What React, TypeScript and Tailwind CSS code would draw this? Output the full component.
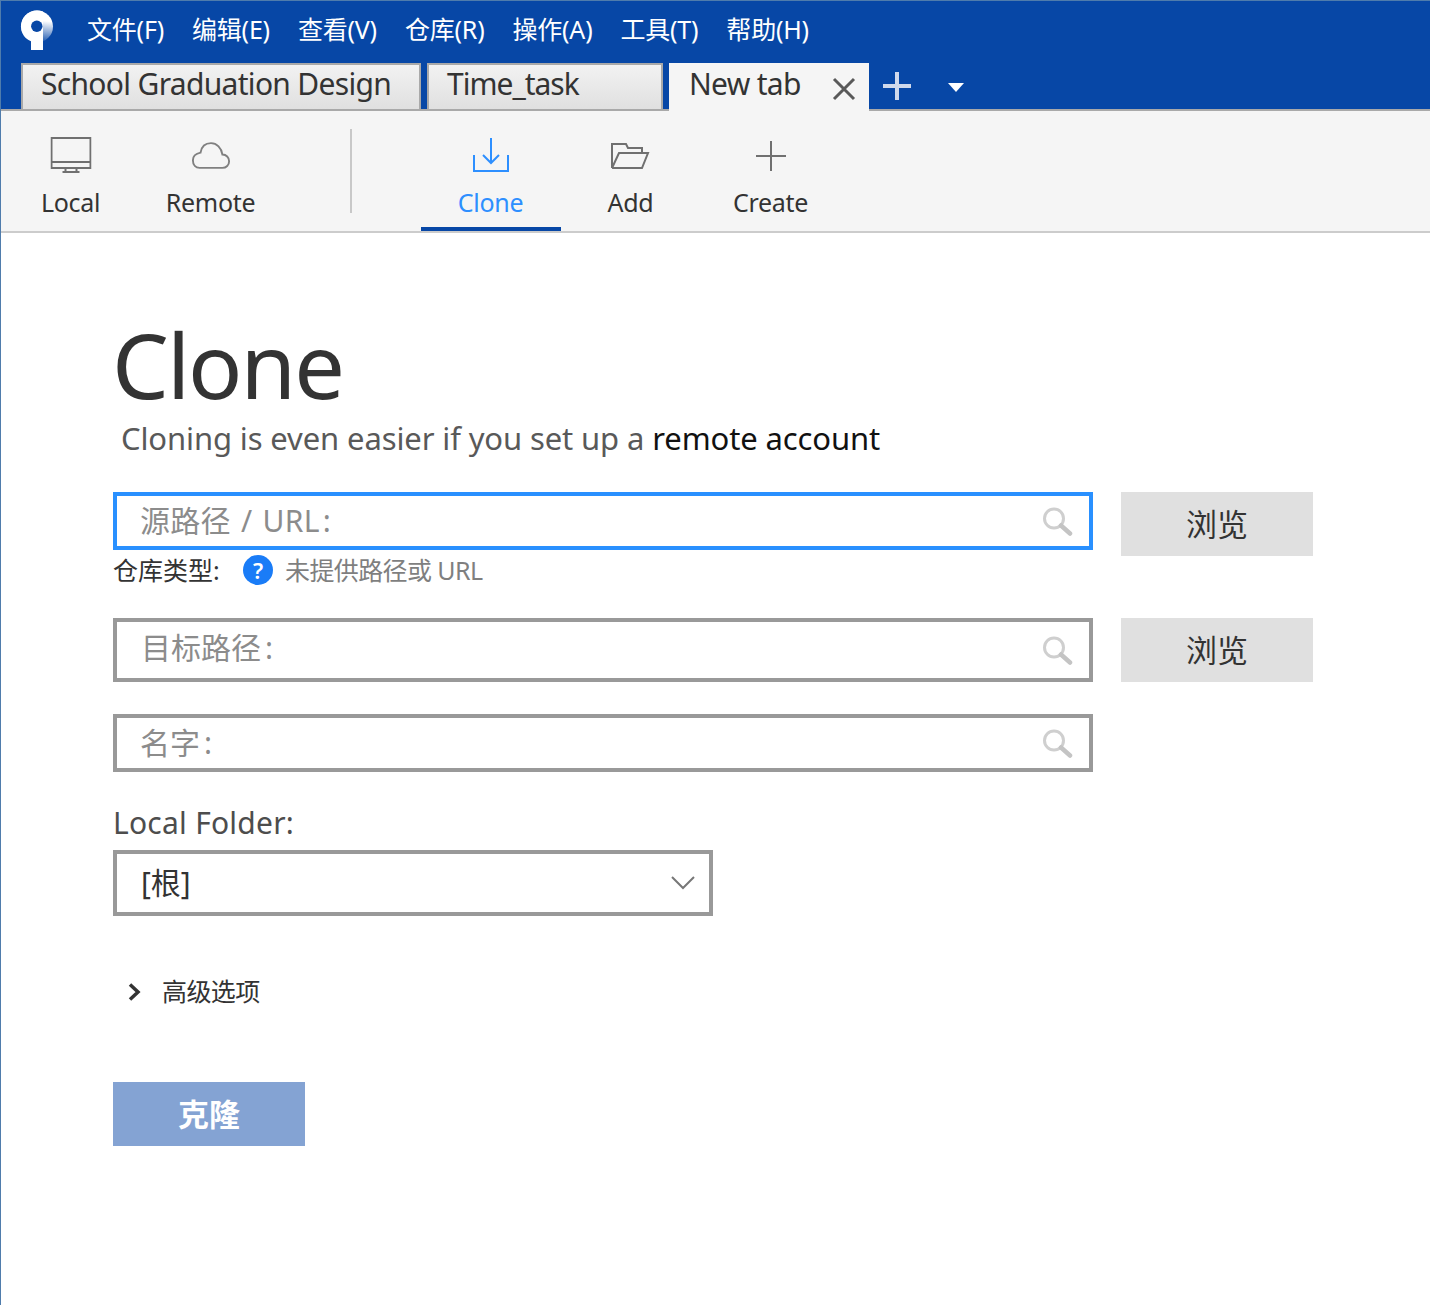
import React from "react";

const FONT = "font-['Noto_Sans','Noto_Sans_CJK_SC',sans-serif]";

function Logo() {
  return (
    <svg width="34" height="42" viewBox="0 0 34 42" className="block">
      <defs>
        <linearGradient id="lg" gradientUnits="userSpaceOnUse" x1="26" y1="12" x2="24" y2="32">
          <stop offset="0" stopColor="#ffffff" />
          <stop offset="1" stopColor="#2a62b4" />
        </linearGradient>
      </defs>
      <circle cx="17" cy="17.5" r="16" fill="url(#lg)" />
      <path d="M23 2.6A16 16 0 1 0 11 32.3L11 41H23V24Z" fill="#fff" />
      <circle cx="16.8" cy="17.2" r="5.7" fill="#0747a6" />
    </svg>
  );
}

function SearchIcon() {
  return (
    <svg width="32" height="32" viewBox="0 0 32 32" className="block blur-[0.6px]">
      <circle cx="12" cy="13.5" r="9.5" fill="none" stroke="#cfcfcf" strokeWidth="3" />
      <path d="M19 20.5L28 28.5" stroke="#c4c4c4" strokeWidth="4.5" strokeLinecap="round" />
    </svg>
  );
}

function ToolItem({ label, active, icon }: { label: string; active?: boolean; icon: React.ReactNode }) {
  return (
    <div
      className={`w-[140px] h-[120px] flex flex-col items-center ${active ? "border-b-[4px] border-[#0747a6]" : ""}`}
    >
      <div className="h-[49px] mt-[26px] flex items-start justify-center">{icon}</div>
      <span className={`text-[25px] leading-[34px] -mt-[1px] -translate-x-[0.5px] tracking-[-0.3px] ${active ? "text-[#2d8fff]" : "text-[#333333]"}`}>
        {label}
      </span>
    </div>
  );
}

function Field({
  placeholder,
  focus,
  h,
  raise,
  wide,
}: {
  placeholder: string;
  focus?: boolean;
  h: string;
  raise?: boolean;
  wide?: boolean;
}) {
  return (
    <div
      className={`w-[980px] ${h} border-[4px] ${focus ? "border-[#2990ff]" : "border-[#999999]"} bg-white flex items-center justify-between pl-[23px] pr-[15px]`}
    >
      <span className={`text-[30px] leading-none text-[#8c8c8c] ${raise ? "mb-[4px] ml-[1px]" : ""}`}>
        {wide ? <span className="[word-spacing:2px] tracking-[0.3px]">{placeholder}</span> : placeholder}
        <span className={wide ? "ml-[3px]" : "ml-[4px]"}>:</span>
      </span>
      <SearchIcon />
    </div>
  );
}

function BrowseBtn() {
  return (
    <div className="w-[192px] h-[64px] bg-[#e0e0e0] flex items-center justify-center text-[31px] text-[#333333]">
      浏览
    </div>
  );
}

export default function App() {
  const menu = ["文件(F)", "编辑(E)", "查看(V)", "仓库(R)", "操作(A)", "工具(T)", "帮助(H)"];
  return (
    <div className={`w-[1430px] h-[1305px] bg-white overflow-hidden flex flex-col border-l border-[#4f7cac] ${FONT}`}>
      <header className="h-[111px] bg-[#0747a6] border-t border-[#4f7cac] border-b-2 border-b-[#a9a9a9] flex flex-col shrink-0">
        <div className="h-[62px] flex items-start pl-[19px] shrink-0">
          <div className="mt-[8px] w-[67px]">
            <Logo />
          </div>
          <nav className="flex gap-[28px] h-[58px] items-center text-[25px] text-white tracking-[-0.2px]">
            {menu.map((m) => (
              <span key={m}>{m}</span>
            ))}
          </nav>
        </div>
        <div className="flex items-stretch h-[46px] pl-[20px] relative">
          <div className="w-[400px] border-2 border-b-0 border-[#a9a9a9] bg-gradient-to-b from-[#f2f2f2] to-[#e0e0e0] pl-[18px] text-[30px] leading-[38px] text-[#333333] tracking-[-0.68px]">
            School Graduation Design
          </div>
          <div className="w-[236px] ml-[6px] border-2 border-b-0 border-[#a9a9a9] bg-gradient-to-b from-[#f2f2f2] to-[#e0e0e0] pl-[18px] text-[30px] leading-[38px] text-[#333333] tracking-[-1px]">
            Time_task
          </div>
          <div className="w-[200px] h-[48px] ml-[6px] bg-[#f5f5f5] pl-[20px] flex items-start justify-between pr-[13px] text-[30px] leading-[42px] text-[#333333] tracking-[-0.7px]">
            New tab
            <svg width="24" height="24" viewBox="0 0 24 24" className="mt-[14px]">
              <path d="M2 2L22 22M22 2L2 22" stroke="#595959" strokeWidth="3" />
            </svg>
          </div>
          <svg width="30" height="30" viewBox="0 0 30 30" className="ml-[13px] mt-[8px]">
            <path d="M15 1V29M1 15H29" stroke="#cfd9ec" strokeWidth="4" />
          </svg>
          <svg width="16" height="9" viewBox="0 0 16 9" className="ml-[36px] mt-[20px]">
            <path d="M0 0H16L8 9Z" fill="#fff" />
          </svg>
        </div>
      </header>

      <div className="h-[122px] bg-[#f5f5f5] border-b-2 border-[#cccccc] flex items-start shrink-0">
        <ToolItem
          label="Local"
          icon={
            <svg width="41" height="37" viewBox="0 0 41 37" fill="none" stroke="#707070" strokeWidth="2" className="-translate-x-[0.5px]">
              <path d="M1 1H40V31H1ZM1 25H40M15 31V35M26 31V35M12 35H29" />
            </svg>
          }
        />
        <ToolItem
          label="Remote"
          icon={
            <svg width="40" height="29" viewBox="0 0 42 30" fill="none" stroke="#808080" strokeWidth="2" className="mt-[4px]">
              <path d="M9 28H33C37 28 40 25 40 21C40 17 37 14 33 14C32 7 27 2 21 2C15 2 11 6 10 12C5 13 2 16 2 20C2 25 5 28 9 28Z" />
            </svg>
          }
        />
        <div className="w-[140px] flex justify-center mt-[18px]">
          <div className="w-[2px] h-[84px] bg-[#c8c8c8]" />
        </div>
        <ToolItem
          active
          label="Clone"
          icon={
            <svg width="38" height="35" viewBox="0 0 38 35" fill="none" stroke="#2d8fff" strokeWidth="2" className="mt-[1px]">
              <path d="M2 17V33H36V17M19 0V25M11 17L19 25L27 17" />
            </svg>
          }
        />
        <ToolItem
          label="Add"
          icon={
            <svg width="40" height="28" viewBox="0 0 40 28" fill="none" stroke="#707070" strokeWidth="2" className="mt-[5px] -translate-x-[1px]">
              <path d="M2 26V2H16L18 6H32V11M2 26H32L38 11H9L2 26" />
            </svg>
          }
        />
        <ToolItem
          label="Create"
          icon={
            <svg width="30" height="30" viewBox="0 0 30 30" fill="none" stroke="#707070" strokeWidth="2" className="mt-[4px]">
              <path d="M15 0V30M0 15H30" />
            </svg>
          }
        />
      </div>

      <main className="pl-[112px] flex flex-col">
        <h1 className="mt-[76px] text-[90px] leading-[110px] text-[#333333] font-normal tracking-[-2px] -ml-[1px]">Clone</h1>
        <p className="-mt-[3px] ml-[8px] text-[31px] leading-[44px] text-[#595959] tracking-[-0.12px]">
          Cloning is even easier if you set up a <span className="text-[#111111]">remote account</span>
        </p>

        <div className="mt-[32px] flex items-start gap-[28px]">
          <Field placeholder="源路径 / URL" wide focus h="h-[58px]" />
          <BrowseBtn />
        </div>
        <div className="flex items-center h-[36px] -mt-[4px] text-[25px] leading-none">
          <span className="text-[#333333] w-[130px]">仓库类型:</span>
          <span className="w-[30px] h-[30px] rounded-full bg-[#1a7cf7] text-white text-[22px] font-semibold flex items-center justify-center">
            ?
          </span>
          <span className="ml-[12px] text-[#7f7f7f] tracking-[-0.6px]">未提供路径或 URL</span>
        </div>

        <div className="mt-[30px] flex items-start gap-[28px]">
          <Field placeholder="目标路径" raise h="h-[64px]" />
          <BrowseBtn />
        </div>
        <div className="mt-[32px]">
          <Field placeholder="名字" h="h-[58px]" />
        </div>

        <div className="mt-[31px] text-[30px] leading-[40px] text-[#4d4d4d] tracking-[0.25px]">Local Folder:</div>
        <div className="mt-[7px] w-[600px] h-[66px] border-[4px] border-[#999999] flex items-center justify-between pl-[24px] pr-[14px]">
          <span className="text-[30px] text-[#333333] leading-none">[根]</span>
          <svg width="24" height="14" viewBox="0 0 24 14" fill="none" stroke="#777777" strokeWidth="2">
            <path d="M1 1L12 12L23 1" />
          </svg>
        </div>

        <div className="mt-[56px] h-[40px] flex items-center">
          <svg width="14" height="18" viewBox="0 0 14 18" fill="none" stroke="#333333" strokeWidth="3.5" className="ml-[15px]">
            <path d="M2 1.5L10 9L2 16.5" />
          </svg>
          <span className="ml-[20px] text-[25px] text-[#333333] tracking-[-0.6px]">高级选项</span>
        </div>

        <div className="mt-[70px] w-[192px] h-[64px] bg-[#84a3d3] flex items-center justify-center text-[31px] font-bold text-white">
          克隆
        </div>
      </main>
    </div>
  );
}
